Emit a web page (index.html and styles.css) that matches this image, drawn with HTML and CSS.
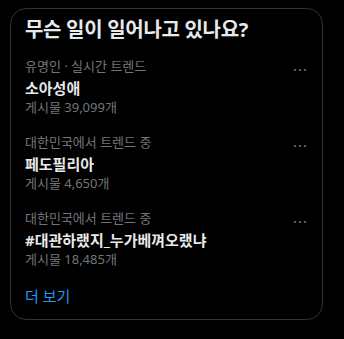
FILE: index.html
```html
<!DOCTYPE html>
<html lang="ko">
<head>
<meta charset="utf-8">
<link rel="stylesheet" href="styles.css">
</head>
<body>
<section class="card">
  <h2 class="title">무슨 일이 일어나고 있나요?</h2>
  <div class="trend">
    <div class="trend-main">
      <div class="meta">유명인 · 실시간 트렌드</div>
      <div class="name">소아성애</div>
      <div class="meta posts">게시물 39,099개</div>
    </div>
    <span class="more"><i></i><i></i><i></i></span>
  </div>
  <div class="trend">
    <div class="trend-main">
      <div class="meta">대한민국에서 트렌드 중</div>
      <div class="name">페도필리아</div>
      <div class="meta posts">게시물 4,650개</div>
    </div>
    <span class="more"><i></i><i></i><i></i></span>
  </div>
  <div class="trend">
    <div class="trend-main">
      <div class="meta">대한민국에서 트렌드 중</div>
      <div class="name">#대관하랬지_누가베껴오랬냐</div>
      <div class="meta posts">게시물 18,485개</div>
    </div>
    <span class="more"><i></i><i></i><i></i></span>
  </div>
  <div class="show-more">더 보기</div>
</section>
</body>
</html>
```
FILE: styles.css
```css
html, body {
  margin: 0;
  background: #000;
}
body {
  padding: 8px 21px 0 10px;
  font-family: "Noto Sans", "Noto Sans CJK KR", sans-serif;
  color: #e7e9ea;
}
.card {
  border: 1px solid #2f3336;
  border-radius: 16px;
  height: 312px;
  box-sizing: border-box;
  padding: 0;
}
.title {
  margin: 0;
  padding: 7px 14px 0;
  font-size: 20px;
  font-weight: 700;
  line-height: 28px;
  letter-spacing: -0.3px;
  color: #e7e9ea;
}
.trend {
  display: flex;
  align-items: flex-start;
  padding: 10px 16px 9px 14px;
}
.trend:first-of-type {
  padding-top: 14px;
}
.trend-main {
  flex: 1;
}
.meta {
  font-size: 13px;
  line-height: 16px;
  color: #71767b;
}
.name {
  margin-top: 4px;
  font-size: 15px;
  font-weight: 700;
  line-height: 20px;
  color: #e7e9ea;
}
.posts {
  margin-top: 1px;
}
.more {
  display: flex;
  gap: 3px;
  margin-top: 11px;
}
.more i {
  width: 2px;
  height: 2px;
  border-radius: 1px;
  background: #71767b;
}
.show-more {
  padding: 10px 14px 0;
  font-size: 15px;
  line-height: 20px;
  color: #1d9bf0;
}
```
